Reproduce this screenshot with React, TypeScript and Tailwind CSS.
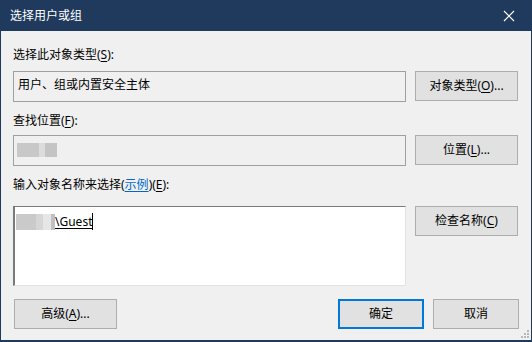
import React from "react";

const font = { fontFamily: '"Noto Sans", "Noto Sans CJK SC", sans-serif' };

function U({ children }: { children: React.ReactNode }) {
  return <span className="underline underline-offset-2">{children}</span>;
}

function Btn({
  children,
  w,
  primary,
}: {
  children: React.ReactNode;
  w: string;
  primary?: boolean;
}) {
  return (
    <div
      className={
        "flex h-[30px] shrink-0 items-center justify-center bg-[#e1e1e1] text-[12px] leading-none text-black " +
        w +
        (primary ? " border-2 border-[#0078d7]" : " border border-[#adadad]")
      }
    >
      {children}
    </div>
  );
}

export default function App() {
  return (
    <div
      className="flex h-[342px] w-[532px] flex-col border-x border-b-2 border-[#1f3a5c] bg-[#1f3a5c]"
      style={font}
    >
      <div className="flex h-[31px] shrink-0 items-center justify-between pl-[9px] pr-[16px]">
        <span className="text-[12px] text-white">选择用户或组</span>
        <svg width="12" height="12" viewBox="0 0 12 12">
          <path d="M1 1 L11 11 M11 1 L1 11" stroke="#ffffff" strokeWidth="1.2" />
        </svg>
      </div>
      <div className="relative flex flex-1 flex-col bg-[#f0f0f0] px-[12px] text-[12px] text-black">
        <div className="mt-[16px] h-[16px] leading-[16px]">
          选择此对象类型(<U>S</U>):
        </div>
        <div className="mt-[8px] flex gap-[9px]">
          <div className="h-[31px] w-[393px] border border-[#a0a0a0] bg-[#f0f0f0] pl-[4px] pt-[5px] leading-[16px]">
            用户、组或内置安全主体
          </div>
          <Btn w="w-[103px]">
            <span>
              对象类型(<U>O</U>)...
            </span>
          </Btn>
        </div>
        <div className="mt-[11px] h-[16px] leading-[16px]">
          查找位置(<U>F</U>):
        </div>
        <div className="mt-[6px] flex gap-[9px]">
          <div className="flex h-[31px] w-[393px] items-start border border-[#a0a0a0] bg-[#f0f0f0] pl-[3px] pt-[7px]">
            <div className="h-[14px] w-[22px] bg-[#c8c8c8]" />
            <div className="h-[14px] w-[6px] bg-[#dcdcdc]" />
            <div className="h-[14px] w-[12px] bg-[#c4c4c4]" />
          </div>
          <Btn w="w-[103px]">
            <span>
              位置(<U>L</U>)...
            </span>
          </Btn>
        </div>
        <div className="mt-[11px] h-[16px] leading-[16px]">
          输入对象名称来选择(<span className="text-[#0066cc] underline underline-offset-2">示例</span>)(<U>E</U>):
        </div>
        <div className="mt-[13px] flex items-start gap-[9px]">
          <div className="h-[80px] w-[393px] border-b border-l-2 border-r border-t border-b-[#e3e3e3] border-l-[#7a7a7a] border-r-[#e3e3e3] border-t-[#7a7a7a] bg-white pl-[1px] pt-[6px]">
            <div className="flex h-[17px] items-center">
              <div className="h-[16px] w-[20px] bg-[#cacaca]" />
              <div className="h-[16px] w-[7px] bg-[#d6d6d6]" />
              <div className="h-[16px] w-[8px] bg-[#e6e6e6]" />
              <div className="h-[16px] w-[4px] bg-[#c0c0c0]" />
              <span className="leading-[16px] underline underline-offset-2">\Guest</span>
              <div className="h-[17px] w-[1px] bg-black" />
            </div>
          </div>
          <Btn w="w-[103px] !h-[30px]">
            <span>
              检查名称(<U>C</U>)
            </span>
          </Btn>
        </div>
        <div className="mt-[13px] flex gap-[9px]">
          <div className="ml-[1px]">
            <Btn w="w-[103px]">
              <span>
                高级(<U>A</U>)...
              </span>
            </Btn>
          </div>
          <div className="flex-1" />
          <Btn w="w-[86px]" primary>
            确定
          </Btn>
          <Btn w="w-[86px]">取消</Btn>
        </div>
        <svg className="absolute bottom-[1px] right-[1px]" width="10" height="10" viewBox="0 0 10 10">
          <g fill="#b8b8b8">
            <rect x="7" y="1" width="2" height="2" />
            <rect x="4" y="4" width="2" height="2" />
            <rect x="7" y="4" width="2" height="2" />
            <rect x="1" y="7" width="2" height="2" />
            <rect x="4" y="7" width="2" height="2" />
            <rect x="7" y="7" width="2" height="2" />
          </g>
        </svg>
      </div>
    </div>
  );
}
